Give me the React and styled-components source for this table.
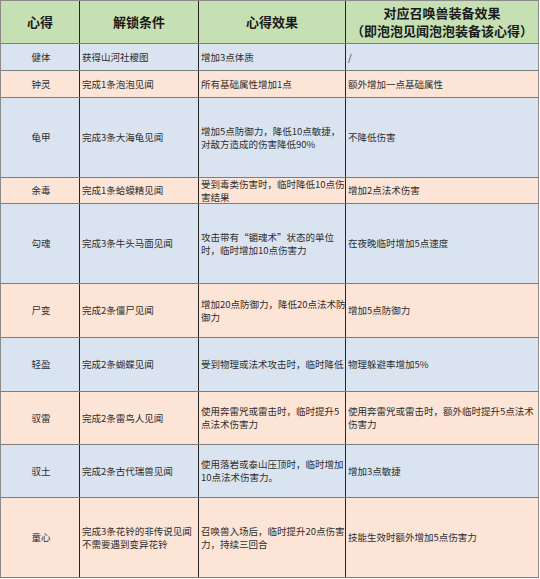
import React from "react";
import styled, { createGlobalStyle } from "styled-components";

const GlobalStyle = createGlobalStyle`
  html, body {
    margin: 0;
    padding: 0;
    background: #ffffff;
  }
  body {
    font-family: "Noto Sans CJK SC", "Noto Sans", sans-serif;
  }
`;

const COLORS = {
  head: "#c6e0b4",
  blue: "#dae4f1",
  peach: "#fce4d6",
};

const Table = styled.div`
  width: 539px;
  border-top: 1px solid #8a8a8a;
  border-left: 1px solid #8a8a8a;
  box-sizing: border-box;
`;

const Row = styled.div`
  display: grid;
  grid-template-columns: 79px 119px 147px 193px;
  height: ${(p) => p.$h}px;
  background: ${(p) => p.$bg};
  border-bottom: 1px solid #7d7d7d;
  box-sizing: border-box;
`;

const Cell = styled.div`
  display: flex;
  align-items: center;
  justify-content: ${(p) => (p.$center ? "center" : "flex-start")};
  padding: 0 0 0 2px;
  border-right: 1px solid ${(p) => (p.$last ? "#8a8a8a" : "#262626")};
  color: #2e2e2e;
  font-size: 9.5px;
  line-height: 13px;
  white-space: nowrap;
  overflow: hidden;
  box-sizing: border-box;
`;

const HeadCell = styled(Cell)`
  justify-content: center;
  text-align: center;
  flex-direction: column;
  padding: 0;
  color: #1a1a1a;
  font-size: 13px;
  font-weight: 700;
  line-height: 18px;
`;

const rows = [
  { h: 27, bg: COLORS.blue, name: "健体", cond: ["获得山河社稷图"], eff: ["增加3点体质"], pet: ["/"] },
  { h: 27, bg: COLORS.peach, name: "钟灵", cond: ["完成1条泡泡见闻"], eff: ["所有基础属性增加1点"], pet: ["额外增加一点基础属性"] },
  {
    h: 80, bg: COLORS.blue, name: "龟甲", cond: ["完成3条大海龟见闻"],
    eff: ["增加5点防御力，降低10点敏捷，", "对敌方造成的伤害降低90%"], pet: ["不降低伤害"],
  },
  {
    h: 26, bg: COLORS.peach, name: "余毒", cond: ["完成1条蛤蟆精见闻"],
    eff: ["受到毒类伤害时，临时降低10点伤", "害结果"], pet: ["增加2点法术伤害"],
  },
  {
    h: 80, bg: COLORS.blue, name: "勾魂", cond: ["完成3条牛头马面见闻"],
    eff: ["攻击带有“镅魂术”状态的单位", "时，临时增加10点伤害力"], pet: ["在夜晚临时增加5点速度"],
  },
  {
    h: 54, bg: COLORS.peach, name: "尸变", cond: ["完成2条僵尸见闻"],
    eff: ["增加20点防御力，降低20点法术防", "御力"], pet: ["增加5点防御力"],
  },
  {
    h: 54, bg: COLORS.blue, name: "轻盈", cond: ["完成2条蝴蝶见闻"],
    eff: ["受到物理或法术攻击时，临时降低"], pet: ["物理躲避率增加5%"],
  },
  {
    h: 53, bg: COLORS.peach, name: "驭雷", cond: ["完成2条雷鸟人见闻"],
    eff: ["使用奔雷咒或雷击时，临时提升5", "点法术伤害力"],
    pet: ["使用奔雷咒或雷击时，额外临时提升5点法术", "伤害力"],
  },
  {
    h: 53, bg: COLORS.blue, name: "驭土", cond: ["完成2条古代瑞兽见闻"],
    eff: ["使用落岩或泰山压顶时，临时增加", "10点法术伤害力。"], pet: ["增加3点敏捷"],
  },
  {
    h: 80, bg: COLORS.peach, name: "童心", cond: ["完成3条花铃的非传说见闻", "不需要遇到变异花铃"],
    eff: ["召唤兽入场后，临时提升20点伤害", "力，持续三回合"], pet: ["技能生效时额外增加5点伤害力"],
  },
];

function Lines({ items }) {
  return (
    <div>
      {items.map((t, i) => (
        <div key={i}>{t}</div>
      ))}
    </div>
  );
}

export default function App() {
  return (
    <>
      <GlobalStyle />
      <Table>
        <Row $h={43} $bg={COLORS.head}>
          <HeadCell>心得</HeadCell>
          <HeadCell>解锁条件</HeadCell>
          <HeadCell>心得效果</HeadCell>
          <HeadCell $last>
            <div>对应召唤兽装备效果</div>
            <div>（即泡泡见闻泡泡装备该心得）</div>
          </HeadCell>
        </Row>
        {rows.map((r) => (
          <Row key={r.name} $h={r.h} $bg={r.bg}>
            <Cell $center>{r.name}</Cell>
            <Cell>
              <Lines items={r.cond} />
            </Cell>
            <Cell>
              <Lines items={r.eff} />
            </Cell>
            <Cell $last>
              <Lines items={r.pet} />
            </Cell>
          </Row>
        ))}
      </Table>
    </>
  );
}
